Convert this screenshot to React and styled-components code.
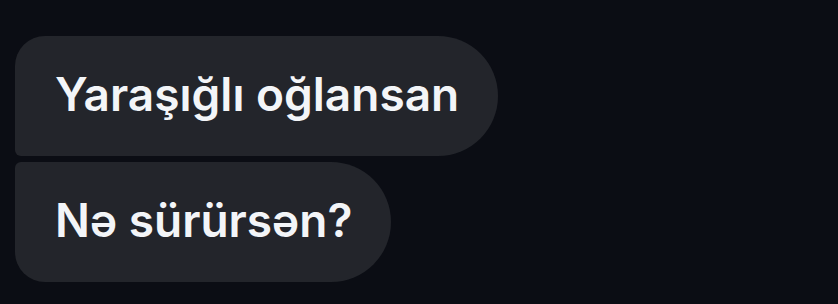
import styled, { createGlobalStyle } from "styled-components";

const GlobalStyle = createGlobalStyle`
  html, body {
    margin: 0;
    padding: 0;
    background: #0b0d14;
  }
  body {
    font-family: Inter, "Noto Sans", "DejaVu Sans", sans-serif;
  }
`;

const Thread = styled.div`
  display: flex;
  flex-direction: column;
  align-items: flex-start;
  gap: 6px;
  padding: 36px 15px;
  min-height: 304px;
  box-sizing: border-box;
`;

const Bubble = styled.div`
  display: flex;
  align-items: center;
  height: 120px;
  box-sizing: border-box;
  padding: 0 39px 4px 40px;
  background: #23252b;
  color: #f3f5f8;
  font-size: 46px;
  font-weight: 600;
  white-space: nowrap;
  border-radius: ${(p) =>
    p.first ? "30px 60px 60px 6px" : "6px 60px 60px 30px"};
`;

const messages = [
  { id: 1, text: "Yaraşığlı oğlansan" },
  { id: 2, text: "Nə sürürsən?" }
];

function App() {
  return (
    <>
      <GlobalStyle />
      <Thread>
        {messages.map((m, i) => (
          <Bubble key={m.id} first={i === 0}>
            {m.text}
          </Bubble>
        ))}
      </Thread>
    </>
  );
}

export default App;
